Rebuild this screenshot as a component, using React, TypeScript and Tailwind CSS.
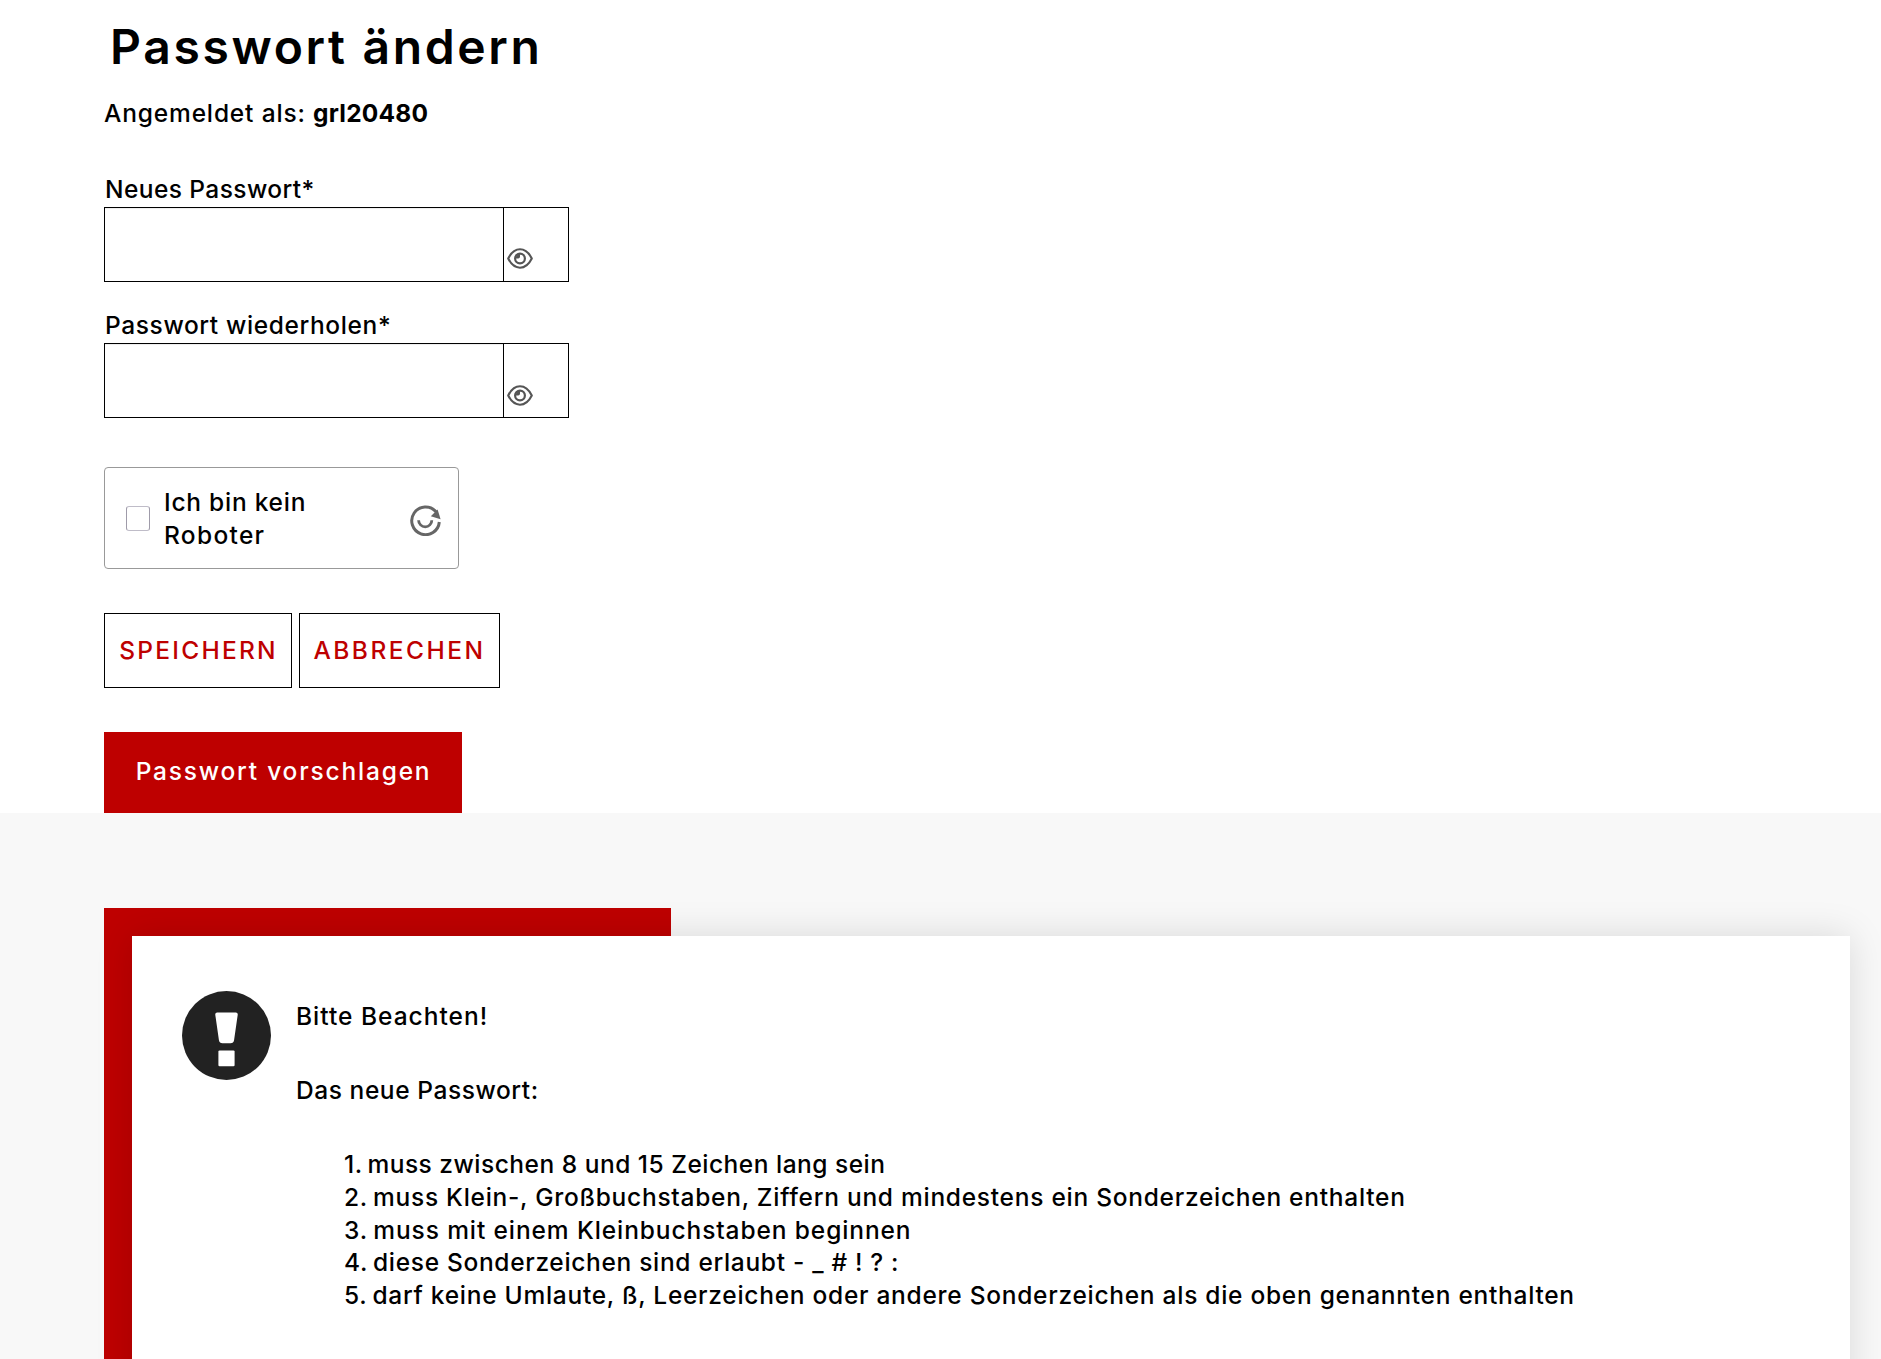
const rules = [
  { text: 'muss zwischen 8 und 15 Zeichen lang sein', tracking: 'tracking-[0.5px]' },
  { text: 'muss Klein-, Großbuchstaben, Ziffern und mindestens ein Sonderzeichen enthalten', tracking: 'tracking-[0.73px]' },
  { text: 'muss mit einem Kleinbuchstaben beginnen', tracking: 'tracking-[0.9px]' },
  { text: 'diese Sonderzeichen sind erlaubt - _ # ! ? :', tracking: 'tracking-[0.68px]' },
  { text: 'darf keine Umlaute, ß, Leerzeichen oder andere Sonderzeichen als die oben genannten enthalten', tracking: 'tracking-[0.725px]' },
]

function EyeIcon({ className }: { className: string }) {
  return (
    <svg className={className} width="26" height="21" viewBox="0 0 26 21" fill="none" stroke="#555" strokeWidth="2.1">
      <path d="M1.2 10.5C4.2 4.5 8.2 1.3 13 1.3s8.8 3.2 11.8 9.2c-3 6-7 9.2-11.8 9.2S4.2 16.5 1.2 10.5z" strokeLinejoin="round" />
      <circle cx="13" cy="10.5" r="4.9" strokeWidth="2.2" />
      <path d="M8.6 10.5a4.4 4.4 0 0 1 4.4-4.4v2.6a1.9 1.9 0 0 1-1.8 1.8z" fill="#555" stroke="none" />
    </svg>
  )
}

function CaptchaIcon() {
  return (
    <svg width="31" height="31" viewBox="0 0 31 31" fill="none" stroke="#666" strokeWidth="3">
      <path d="M26 6.8A13.8 13.8 0 1 0 29.3 17" />
      <path d="M8.6 15.2a6.6 6.6 0 0 0 13.2 0" strokeWidth="2.8" />
      <path d="M27.6 4.4 30.6 14.2 20.8 11.2z" fill="#666" stroke="none" />
    </svg>
  )
}

function WarningIcon() {
  return (
    <svg width="89" height="89" viewBox="0 0 89 89">
      <circle cx="44.5" cy="44.5" r="44.5" fill="#222" />
      <path d="M35.2 21.5h18.6q2.2 0 1.9 2.4l-3.6 25.2q-.5 3.2-3.6 3.2h-8q-3.1 0-3.6-3.2l-3.6-25.2q-.3-2.4 1.9-2.4z" fill="#fff" />
      <rect x="36.4" y="59.4" width="16.2" height="15.8" rx="1.2" fill="#fff" />
    </svg>
  )
}

function PasswordField({ iconClass }: { iconClass: string }) {
  return (
    <div className="mt-px flex h-[75px] w-[465px] border border-black">
      <input type="password" className="w-[398px] shadow-[inset_0_1px_1px_rgba(0,0,0,0.075)] outline-none" />
      <button type="button" className="flex flex-1 items-end border-l border-black pl-[3px]">
        <EyeIcon className={iconClass} />
      </button>
    </div>
  )
}

export default function App() {
  return (
    <div className="h-[1359px] overflow-hidden bg-white font-['Inter',sans-serif] text-[24.5px] leading-[33px] font-medium text-black">
      <div className="pt-[17px] pl-[104px]">
        <h1 className="pl-[6px] text-5xl leading-[60px] font-semibold tracking-[2.65px]">Passwort ändern</h1>
        <p className="mt-5 whitespace-pre">
          <span className="tracking-[0.84px]">Angemeldet als: </span>
          <strong className="font-bold tracking-[0.2px]">grl20480</strong>
        </p>

        {/* Form */}
        <form>
          <label className="mt-[43px] block pl-px tracking-[0.42px]">Neues Passwort*</label>
          <PasswordField iconClass="mb-3" />
          <label className="mt-[27px] block pl-px tracking-[0.62px]">Passwort wiederholen*</label>
          <PasswordField iconClass="mb-[11px]" />

          <div className="mt-[49px] flex h-[102px] w-[355px] rounded-[4px] border border-[#999] pl-[21px]">
            <span className="mt-[38px] h-[25px] w-6 rounded-[3px] border border-[#9f9ba9] border-y-[#bfbcc8] bg-white" />
            <div className="mt-[18px] ml-[14px] w-[234px]">
              <div className="tracking-[0.75px]">Ich bin kein</div>
              <div className="tracking-[1.3px]">Roboter</div>
            </div>
            <div className="mt-[37px] ml-3">
              <CaptchaIcon />
            </div>
          </div>

          <div className="mt-[44px] flex gap-[7px] text-[#be0000]">
            <button type="button" className="h-[75px] w-[188px] border border-black pl-px tracking-[2.25px]">SPEICHERN</button>
            <button type="button" className="h-[75px] w-[201px] border border-black tracking-[2.5px]">ABBRECHEN</button>
          </div>

          <button type="button" className="mt-[44px] block h-[81px] w-[358px] bg-[#be0000] pb-[2px] pl-px tracking-[1.8px] text-white">
            Passwort vorschlagen
          </button>
        </form>
      </div>

      {/* Password rules */}
      <div className="h-[546px] bg-[#f8f8f8] pt-[95px] pl-[104px]">
        <div className="h-[600px] w-[1746px] bg-[linear-gradient(#be0000,#be0000)] bg-[length:567px_100%] bg-no-repeat pt-7 pl-7">
          <div className="flex h-full bg-white pt-[55px] pl-[50px] shadow-[0_0_35px_rgba(0,0,0,0.13)]">
            <div className="w-[114px]">
              <WarningIcon />
            </div>
            <div className="pt-[9px]">
              <p className="tracking-[1px]">Bitte Beachten!</p>
              <p className="mt-[41px] tracking-[0.57px]">Das neue Passwort:</p>
              <ol className="mt-[41px] pl-12 leading-[32.75px]">
                {rules.map((rule, i) => (
                  <li key={rule.text} className={rule.tracking}>
                    <span className="mr-[-2px]">{i + 1}. </span>
                    {rule.text}
                  </li>
                ))}
              </ol>
            </div>
          </div>
        </div>
      </div>
    </div>
  )
}
